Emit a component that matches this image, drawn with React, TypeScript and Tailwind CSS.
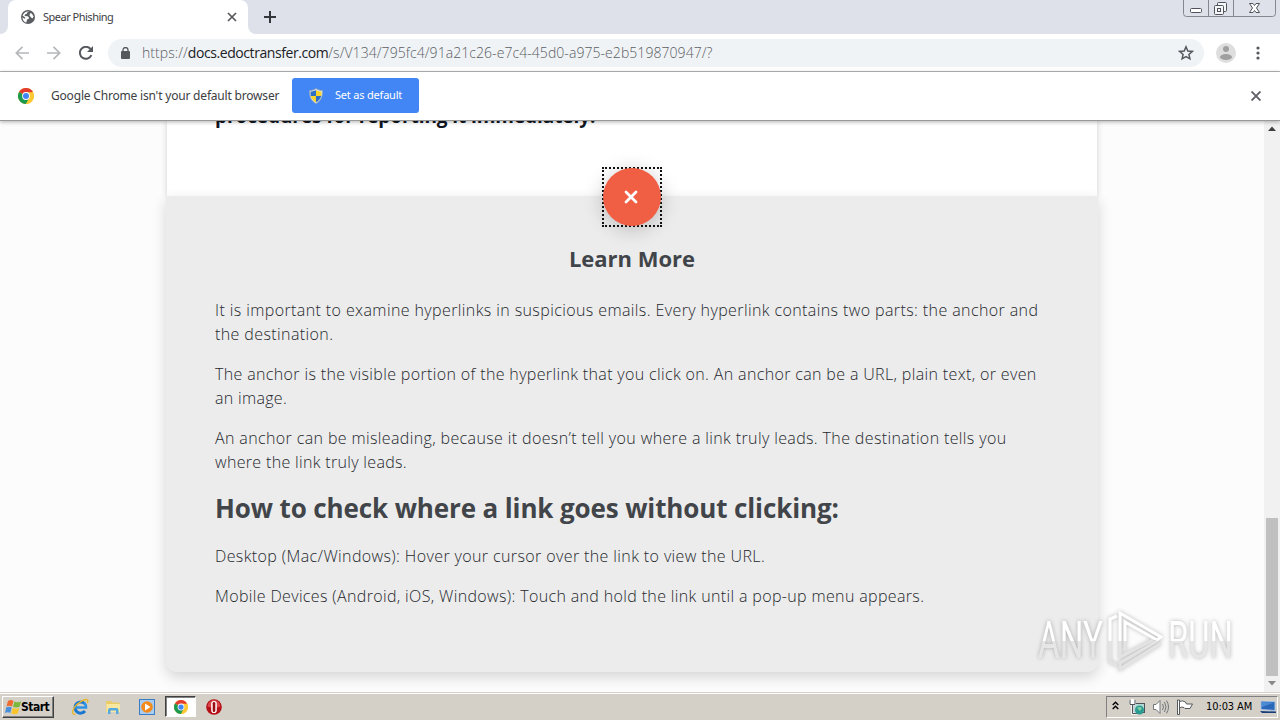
import React from 'react';

const TAHOMA = "font-['Noto_Sans','Open_Sans',sans-serif]";

const GlobeIcon = () => (
  <svg className="size-[14px]" viewBox="0 0 14 14">
    <circle cx="7" cy="7" r="7" fill="#5a5d61" />
    <path d="M8.5 1.5 6.400 2.200 5.800 3.800 4 4.400 3.500 6 6.600 6.200 8 7.600 7.600 9 6 9.600 5.400 12.600C3 12 1.400 9.800 1.400 7.200L3.400 8.800 4.600 8 3 6.600 1.600 5.800C2.200 3 4.800 1 8.500 1.500Z" fill="#fff" />
    <path d="M9 3.200 10.800 3.400 12.400 6.200 11.600 8.600 10 7.600 8.600 5.400Z" fill="#fff" />
  </svg>
);

const ChromeIcon = ({ className }: { className: string }) => (
  <svg className={className} viewBox="0 0 16 16">
    <circle cx="8" cy="8" r="8" fill="#fcc934" />
    <path d="M8 8 1.070 4A8 8 0 0 1 14.930 4Z" fill="#e33b2e" />
    <path d="M1.070 4A8 8 0 0 0 8 16L11.400 10 8 8Z" fill="#1e9950" />
    <path d="M8 4.200H15A8 8 0 0 1 8 16L11.400 10Z" fill="#fcc934" />
    <circle cx="8" cy="8" r="3.900" fill="#fff" />
    <circle cx="8" cy="8" r="3" fill="#4285f4" />
  </svg>
);

const ShieldIcon = () => (
  <svg className="h-4 w-[14px]" viewBox="0 0 14 16">
    <path d="M7 0.5C9 2 11 2.500 13.500 2.500 13.800 8 12 13 7 15.500 2 13 .2 8 .5 2.500 3 2.500 5 2 7 .5Z" fill="#dfe6ee" stroke="#8fa3b5" strokeWidth=".8" />
    <path d="M7 2V8H1.800C1.500 6.500 1.500 5 1.600 3.600 4 3.400 5.500 3 7 2Z" fill="#2d6fc4" />
    <path d="M7 2V8H12.200C12.500 6.500 12.500 5 12.400 3.600 10 3.400 8.500 3 7 2Z" fill="#f7d32e" />
    <path d="M7 8V14.300C4.400 13 2.600 11 1.800 8Z" fill="#f7d32e" />
    <path d="M7 8V14.300C9.600 13 11.400 11 12.200 8Z" fill="#2d6fc4" />
  </svg>
);

const TabStrip = () => (
  <div className="flex h-[34px] bg-[#dee1e9]">
    <div className="relative ml-2 flex h-[34px] w-[240px] items-center rounded-t-lg bg-white pl-[13px] pr-[11px]">
      <svg className="absolute -left-2 bottom-0 size-2" viewBox="0 0 8 8">
        <path d="M8 0V8H0A8 8 0 0 0 8 0Z" fill="#fff" />
      </svg>
      <svg className="absolute -right-2 bottom-0 size-2" viewBox="0 0 8 8">
        <path d="M0 0V8H8A8 8 0 0 1 0 0Z" fill="#fff" />
      </svg>
      <GlobeIcon />
      <span className="ml-[8px] flex-1 whitespace-nowrap text-[11px] tracking-[-0.5px] text-[#3c4043]">Spear Phishing</span>
      <svg className="size-[10px]" viewBox="0 0 10 10" stroke="#55585c" strokeWidth="1.700">
        <path d="M1 1 9 9M9 1 1 9" />
      </svg>
    </div>
    <svg className="ml-[16px] mt-[11px] size-3" viewBox="0 0 12 12" stroke="#33363a" strokeWidth="2">
      <path d="M6 0V12M0 6H12" />
    </svg>
    <svg className="ml-auto mr-1 h-[17px] w-[93px]" viewBox="0 0 93 17" fill="none" stroke="#84878f">
      <path d="M.5 0V13.500Q.5 16.500 3.500 16.500H89.500Q92.500 16.500 92.500 13.500V0M25.500 0V16M50.500 0V16" />
      <g stroke="#50535b">
        <rect x="7.500" y="8.500" width="11" height="4" rx="1" fill="#fff" />
        <rect x="34.500" y="2.500" width="9" height="9" rx="1" fill="#f5f6f8" />
        <rect x="31.500" y="5.500" width="9" height="9" rx="1" fill="#f5f6f8" />
        <rect x="34.500" y="8.500" width="3" height="3" />
        <path d="M66.500 3.500H70L71.500 5.500 73 3.500H76.500L73.500 8 76.500 12.500H73L71.500 10.500 70 12.500H66.500L69.500 8Z" fill="#fff" />
      </g>
    </svg>
  </div>
);

const Toolbar = () => (
  <div className="flex h-[38px] items-center border-b border-[#b4b5b7] bg-white pl-[15px] pr-[20px]">
    <svg className="size-[14px]" viewBox="0 0 14 14" fill="none" stroke="#b5b7ba" strokeWidth="1.700">
      <path d="M14 7H1.500M7.500 .8 1.300 7 7.500 13.200" />
    </svg>
    <svg className="ml-[18px] size-[14px]" viewBox="0 0 14 14" fill="none" stroke="#b5b7ba" strokeWidth="1.700">
      <path d="M0 7H12.500M6.500 .8 12.700 7 6.500 13.200" />
    </svg>
    <svg className="ml-[18px] size-[14px]" viewBox="0 0 14 14" fill="none" stroke="#55585c" strokeWidth="2">
      <path d="M12.400 9.200A6 6 0 1 1 11.500 3" />
      <path d="M14 0V6H8Z" fill="#55585c" stroke="none" />
    </svg>
    <div className="ml-[15px] flex h-7 w-[1096px] items-center rounded-full bg-[#f0f3f6] pl-[13px] pr-[10px]">
      <svg className="h-3 w-[9px]" viewBox="0 0 9 12">
        <rect y="4" width="9" height="8" rx="1" fill="#55585c" />
        <path d="M2 5V3A2.500 2.500 0 0 1 7 3V5" fill="none" stroke="#55585c" strokeWidth="1.300" />
      </svg>
      <span className="-mt-px ml-[12px] flex-1 whitespace-nowrap font-['Open_Sans',sans-serif] text-[14px] font-light tracking-[0.06px] text-[#5a5e63]">
        https://<span className="font-normal tracking-[-0.43px] text-[#202124]">docs.edoctransfer.com</span>/s/V134/795fc4/91a21c26-e7c4-45d0-a975-e2b519870947/?
      </span>
      <svg className="size-4" viewBox="0 0 16 16" fill="none" stroke="#55585c" strokeWidth="1.500">
        <path d="M8 1.800 9.800 6 14.300 6.400 10.900 9.400 11.900 13.800 8 11.500 4.100 13.800 5.100 9.400 1.700 6.400 6.200 6Z" />
      </svg>
    </div>
    <svg className="ml-[12px] size-5" viewBox="0 0 20 20">
      <circle cx="10" cy="10" r="10" fill="#dedede" />
      <circle cx="10" cy="6" r="3" fill="#a0a0a0" />
      <ellipse cx="10" cy="14" rx="6" ry="3" fill="#a0a0a0" />
    </svg>
    <svg className="ml-auto h-[14px] w-[4px]" viewBox="0 0 4 14" fill="#55585c">
      <circle cx="2" cy="2" r="1.600" />
      <circle cx="2" cy="7" r="1.600" />
      <circle cx="2" cy="12" r="1.600" />
    </svg>
  </div>
);

const InfoBar = () => (
  <div className="relative z-10 flex h-[49px] items-center border-b border-[#999] bg-white pl-[18px] pr-[19px] shadow-[0_1px_4px_rgba(0,0,0,0.3)]">
    <ChromeIcon className="size-4" />
    <span className="-mt-px ml-[17px] w-[241px] whitespace-nowrap text-[12px] tracking-[-0.19px] text-[#3c3e41]">Google Chrome isn't your default browser</span>
    <button className="-mt-px flex h-[35px] w-[127px] items-center rounded-[3px] bg-[#4285f4] pl-[17px]">
      <ShieldIcon />
      <span className="ml-3 whitespace-nowrap text-[11px] tracking-[-0.2px] text-white">Set as default</span>
    </button>
    <svg className="ml-auto size-[10px]" viewBox="0 0 10 10" stroke="#5f6266" strokeWidth="1.900">
      <path d="M.5 .5 9.500 9.500M9.500 .5 .5 9.500" />
    </svg>
  </div>
);

const Article = () => (
  <div className="mx-auto w-[932px] whitespace-nowrap">
    <div className="mx-px flow-root h-[75px] bg-white pl-12 shadow-[0_0_6px_rgba(0,0,0,0.18)]">
      <p className="-mt-[17px] text-[19px] font-bold leading-6 tracking-[-0.08px] text-[#10161f]">procedures for reporting it immediately.</p>
    </div>
    <div className="relative h-[476px] rounded-b-[10px] bg-[#ececec] px-[49px] pt-[50px] text-[#414549] shadow-[0_5px_14px_rgba(0,0,0,0.16)]">
      <button className="absolute left-[436px] -top-[29px] size-[60px] border-2 border-dotted border-[#111]">
        <span className="-m-px flex size-[58px] items-center justify-center rounded-full bg-[#f05f44] pr-[2px] shadow-[0_3px_20px_rgba(0,0,0,0.22)]">
          <svg className="size-[14px]" viewBox="0 0 14 14" stroke="#fff" strokeWidth="2.800" strokeLinecap="round">
            <path d="M2 2 12 12M12 2 2 12" />
          </svg>
        </span>
      </button>
      <h3 className="text-center text-[22px] font-bold leading-6">Learn More</h3>
      <div className="mt-[28px] space-y-4 text-[16px] font-light leading-6 text-[#25282d]">
        <p>
          <span className="tracking-[0.4px]">It is important to examine hyperlinks in suspicious emails. Every hyperlink contains two parts: the anchor and</span>
          <br />
          <span className="tracking-[0.4px]">the destination.</span>
        </p>
        <p>
          <span className="tracking-[0.355px]">The anchor is the visible portion of the hyperlink that you click on. An anchor can be a URL, plain text, or even</span>
          <br />
          <span className="tracking-[0.32px]">an image.</span>
        </p>
        <p>
          <span className="tracking-[0.375px]">An anchor can be misleading, because it doesn’t tell you where a link truly leads. The destination tells you</span>
          <br />
          <span className="tracking-[0.33px]">where the link truly leads.</span>
        </p>
      </div>
      <h2 className="mt-[15px] text-[26px] font-bold leading-[38px] tracking-[-0.12px]">How to check where a link goes without clicking:</h2>
      <div className="mt-[17px] space-y-4 text-[16px] font-light leading-6 text-[#25282d]">
        <p className="tracking-[0.385px]">Desktop (Mac/Windows): Hover your cursor over the link to view the URL.</p>
        <p className="tracking-[0.355px]">Mobile Devices (Android, iOS, Windows): Touch and hold the link until a pop-up menu appears.</p>
      </div>
    </div>
  </div>
);

const Watermark = () => (
  <div className="absolute left-[1038px] top-[489px] flex h-[62px] w-[196px] items-center justify-between drop-shadow-[0_0_2px_rgba(0,0,0,0.28)]">
    <span className="w-[64px] font-['Roboto',sans-serif] text-[52px] leading-[62px]">
      <span className="inline-block origin-left scale-x-[0.64] bg-linear-to-b from-white from-50% to-[#e6e6e6] to-50% bg-clip-text text-transparent">ANY</span>
    </span>
    <svg className="-mx-1 h-[62px] w-[58px] shrink-0" viewBox="0 0 58 62" fill="none" strokeWidth="3">
      <path d="M4 31V9L11 6M14 31V3L55 27 51 30 19 12V31" stroke="#fff" />
      <path d="M4 31V52L11 55M14 31V47L47 30M55 33 14 59V53L51 31M19 31V40" stroke="#e3e3e3" />
    </svg>
    <span className="w-[66px] font-['Roboto',sans-serif] text-[52px] leading-[62px]">
      <span className="inline-block origin-left scale-x-[0.63] bg-linear-to-b from-white from-50% to-[#e6e6e6] to-50% bg-clip-text text-transparent">RUN</span>
    </span>
  </div>
);

const Page = () => (
  <div className="relative flex h-[571px] overflow-hidden bg-[#fcfcfc] font-['Open_Sans',sans-serif]">
    <div className="flex-1">
      <Article />
    </div>
    <div className="flex w-4 flex-col items-center bg-[#f1f1f1]">
      <svg className="mt-[5px] h-[5px] w-2 shrink-0" viewBox="0 0 8 5"><path d="M0 5 4 .5 8 5Z" fill="#404040" /></svg>
      <div className="mt-[387px] h-[158px] w-3 shrink-0 bg-[#c0c0c0]" />
      <svg className="mt-[5px] h-[5px] w-2 shrink-0" viewBox="0 0 8 5"><path d="M0 0 4 4.500 8 0Z" fill="#888" /></svg>
    </div>
    <Watermark />
  </div>
);

const WindowsFlag = () => (
  <svg className="h-4 w-[17px]" viewBox="0 0 17 16">
    <path d="M3 2Q6 0 8.500 2L7 7.500Q4 6 1.500 7.500Z" fill="#ee6b2f" />
    <path d="M9.500 2.500Q12 4 16 2.500L14.500 8Q11 9 8 7.800Z" fill="#7cb83b" />
    <path d="M1.200 8.500Q4 7 6.800 8.500L5.200 14Q3 12.500 0 14Z" fill="#4a8fdd" />
    <path d="M7.800 8.800Q11 10.500 14.200 9L12.800 14.500Q9 16 6.200 14.300Z" fill="#f8c52c" />
  </svg>
);

const Taskbar = () => (
  <div className="flex h-7 items-center border-t border-[#d4d0c8] bg-[#d4d0c8] shadow-[inset_0_1px_0_#fff]">
    <button className="ml-[2px] flex h-[22px] w-[52px] items-center border border-[#404040] border-l-white border-t-white pl-[2px] font-['DejaVu_Sans_Condensed','DejaVu_Sans',sans-serif] text-[12px] font-bold text-black shadow-[inset_-1px_-1px_0_#808080]">
      <WindowsFlag />
      <span className="-ml-px tracking-[-0.5px]">Start</span>
    </button>
    <div className="ml-[17px] flex items-center">
      <svg className="size-[18px]" viewBox="0 0 18 18" fill="none">
        <path d="M13.500 5.500A5.600 5.600 0 1 0 14 13" stroke="#1c78cf" strokeWidth="3" />
        <path d="M4.500 9.500H15Q15.200 6.500 13 5" stroke="#2f93e4" strokeWidth="2.600" />
        <path d="M4.500 16.300C-1 17 2 9 8.500 4.500 14 .5 18.500 .5 16.300 5" stroke="#e6b62e" strokeWidth="1.400" />
      </svg>
      <svg className="ml-[16px] h-4 w-4" viewBox="0 0 16 16">
        <path d="M1 2H6L7.500 3.500H14.500V13H1Z" fill="#eacb66" />
        <path d="M1.500 5H15V13H1.500Z" fill="#f7e7a0" />
        <path d="M3 15V11Q3 9 5 9H11.500Q13.500 9 13.500 11V15H11V11.500H5.500V15Z" fill="#56a9df" />
      </svg>
      <svg className="ml-[18px] size-4" viewBox="0 0 16 16">
        <rect x=".5" y=".5" width="15" height="15" fill="#a9cdf0" stroke="#3c7cc0" />
        <circle cx="8" cy="8" r="5.800" fill="#f28a1c" />
        <path d="M6 4.500V11.500L11.500 8Z" fill="#fff" />
      </svg>
      <div className="ml-[10px] flex h-[21px] w-[31px] items-center justify-center border border-white border-l-[#404040] border-t-[#404040] bg-white shadow-[inset_1px_1px_0_#808080]">
        <ChromeIcon className="size-[14px]" />
      </div>
      <svg className="ml-[10px] size-4" viewBox="0 0 16 16">
        <circle cx="8" cy="8" r="7.800" fill="#b50f17" />
        <path d="M1.500 7.500A6.500 6.500 0 0 1 14.500 7.500Q8 10 1.500 7.500Z" fill="#d9454a" />
        <rect x="5.200" y="2" width="5.600" height="12" rx="2.800" fill="#fff" />
        <rect x="6.700" y="3" width="2.600" height="10" rx="1.300" fill="#9c0c13" />
      </svg>
    </div>
    <div className="ml-auto mr-[2px] mt-px flex h-[22px] w-[172px] items-center border border-white border-l-[#808080] border-t-[#808080] pl-[5px]">
      <svg className="mb-1 h-[9px] w-[7px]" viewBox="0 0 7 9" fill="none" stroke="#000" strokeWidth="1.400">
        <path d="M.7 4 3.500 1.200 6.300 4M.7 8 3.500 5.200 6.300 8" />
      </svg>
      <svg className="ml-[10px] h-[17px] w-4" viewBox="0 0 16 17">
        <rect x="4.500" y="4.500" width="11" height="9" fill="#b4d9d5" stroke="#4b5358" />
        <path d="M1.500 1V5H5.500V1M3.500 0V14.500H8" fill="none" stroke="#fff" strokeWidth="2.500" />
        <path d="M1 1V5.500H6V1M3.500 5V14.500H8" fill="none" stroke="#4b5358" />
        <circle cx="10.500" cy="11" r="4.500" fill="#2c9c92" />
        <path d="M8 9Q10 7 13 9L11 12Z" fill="#7fd0a5" />
      </svg>
      <svg className="ml-[8px] size-4" viewBox="0 0 16 16" fill="none" stroke="#73777b">
        <path d="M.5 5.500H3L7 1.500V14.500L3 10.500H.5Z" fill="#fff" />
        <path d="M9.500 5Q11.500 8 9.500 11M11.500 3Q14.500 8 11.500 13M13.500 1.500Q17.500 8 13.500 14.500" />
      </svg>
      <svg className="ml-[8px] h-4 w-[17px]" viewBox="0 0 17 16" fill="#fff" stroke="#55595d">
        <path d="M.5 1V15.500H2.500V1Z" />
        <path d="M2.500 2.500Q5.500 1 8.500 3L9.500 5H15.500L13 9.500H8L7 8.500Q4.500 7.500 2.500 9Z" />
      </svg>
      <span className="ml-[12px] whitespace-nowrap font-['DejaVu_Sans_Condensed','DejaVu_Sans',sans-serif] text-[11px] tracking-[-0.1px] text-black">10:03 AM</span>
      <svg className="ml-auto mr-[1px] h-3 w-4" viewBox="0 0 16 12">
        <path d="M1 0 15 .5V9.500L1 8.500Z" fill="#2b67b8" stroke="#a9c4e4" />
        <path d="M2 1 14 1.500 2 6Z" fill="#4e8bd5" />
        <path d="M0 10 16 10.500V12H2Z" fill="#173c78" />
      </svg>
    </div>
  </div>
);

export default function App() {
  return (
    <div className={`h-[720px] w-[1280px] overflow-hidden ${TAHOMA}`}>
      <TabStrip />
      <Toolbar />
      <InfoBar />
      <Page />
      <Taskbar />
    </div>
  );
}
